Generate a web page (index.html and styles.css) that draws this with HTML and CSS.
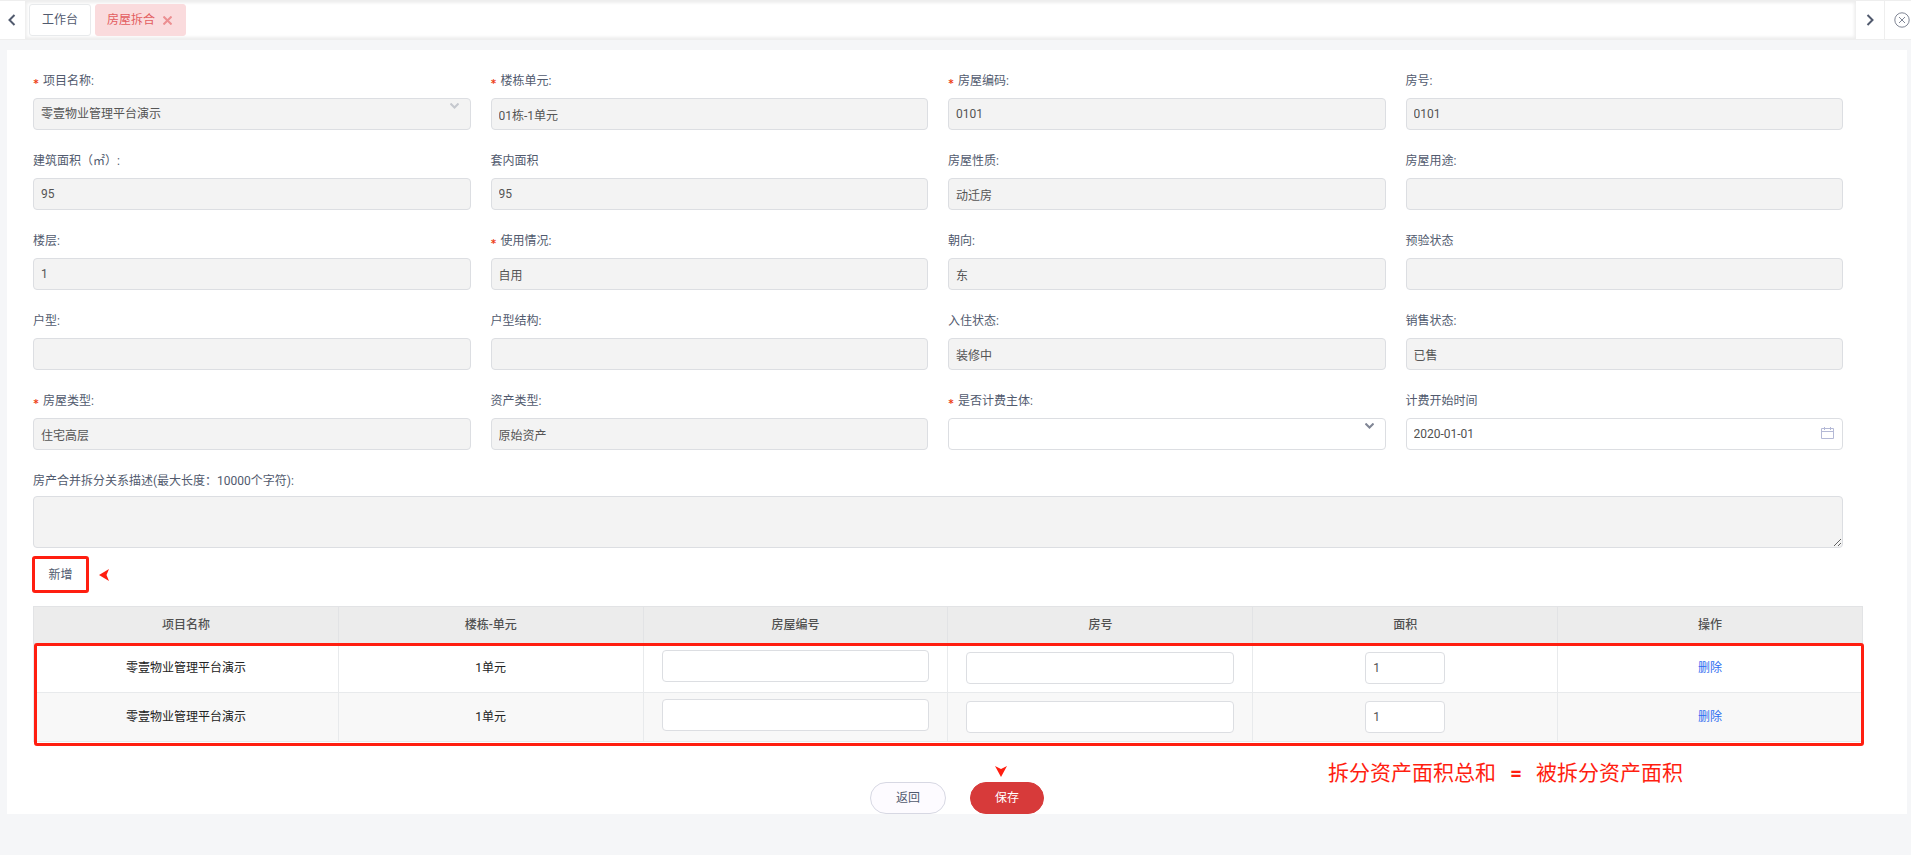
FILE: index.html
```
<!DOCTYPE html>
<html lang="zh-CN">
<head>
  <meta charset="utf-8">
  <meta name="viewport" content="width=device-width, initial-scale=1.0">
  <title>房屋拆合</title>
  <link rel="stylesheet" href="styles.css">
</head>
<body>

  <!-- 页签栏 -->
  <nav class="tabs">
    <button class="tabs-btn tabs-prev" type="button" aria-label="向左">
      <svg width="8" height="12" viewBox="0 0 8 12"><path d="M6.5 1L1.5 6l5 5"/></svg>
    </button>
    <div class="tabs-list">
      <a class="tab" href="#">工作台</a>
      <a class="tab tab-current" href="#">房屋拆合
        <svg width="9" height="9" viewBox="0 0 9 9"><path d="M.5.5l8 8M8.5.5l-8 8"/></svg>
      </a>
    </div>
    <button class="tabs-btn tabs-next" type="button" aria-label="向右">
      <svg width="8" height="12" viewBox="0 0 8 12"><path d="M1.5 1l5 5-5 5"/></svg>
    </button>
    <button class="tabs-btn tabs-close" type="button" aria-label="关闭全部">
      <svg width="16" height="16" viewBox="0 0 16 16"><circle cx="8" cy="8" r="7.2"/><path d="M5 5l6 6M11 5l-6 6"/></svg>
    </button>
  </nav>

  <main class="panel">
    <form class="form">
      <div class="fields">
        <div class="field">
          <label class="required" for="project">项目名称:</label>
          <div class="select">
            <select id="project" disabled><option>零壹物业管理平台演示</option></select>
            <svg width="9" height="6" viewBox="0 0 9 6"><path d="M.5.5l4 4 4-4"/></svg>
          </div>
        </div>
        <div class="field">
          <label class="required" for="unit">楼栋单元:</label>
          <input id="unit" type="text" value="01栋-1单元" disabled>
        </div>
        <div class="field">
          <label class="required" for="code">房屋编码:</label>
          <input id="code" type="text" value="0101" disabled>
        </div>
        <div class="field">
          <label for="room">房号:</label>
          <input id="room" type="text" value="0101" disabled>
        </div>

        <div class="field">
          <label for="area">建筑面积（㎡）:</label>
          <input id="area" type="text" value="95" disabled>
        </div>
        <div class="field">
          <label for="inner">套内面积</label>
          <input id="inner" type="text" value="95" disabled>
        </div>
        <div class="field">
          <label for="nature">房屋性质:</label>
          <input id="nature" type="text" value="动迁房" disabled>
        </div>
        <div class="field">
          <label for="purpose">房屋用途:</label>
          <input id="purpose" type="text" disabled>
        </div>

        <div class="field">
          <label for="floor">楼层:</label>
          <input id="floor" type="text" value="1" disabled>
        </div>
        <div class="field">
          <label class="required" for="usage">使用情况:</label>
          <input id="usage" type="text" value="自用" disabled>
        </div>
        <div class="field">
          <label for="facing">朝向:</label>
          <input id="facing" type="text" value="东" disabled>
        </div>
        <div class="field">
          <label for="check">预验状态</label>
          <input id="check" type="text" disabled>
        </div>

        <div class="field">
          <label for="layout">户型:</label>
          <input id="layout" type="text" disabled>
        </div>
        <div class="field">
          <label for="structure">户型结构:</label>
          <input id="structure" type="text" disabled>
        </div>
        <div class="field">
          <label for="live">入住状态:</label>
          <input id="live" type="text" value="装修中" disabled>
        </div>
        <div class="field">
          <label for="sale">销售状态:</label>
          <input id="sale" type="text" value="已售" disabled>
        </div>

        <div class="field">
          <label class="required" for="type">房屋类型:</label>
          <input id="type" type="text" value="住宅高层" disabled>
        </div>
        <div class="field">
          <label for="asset">资产类型:</label>
          <input id="asset" type="text" value="原始资产" disabled>
        </div>
        <div class="field">
          <label class="required" for="billing">是否计费主体:</label>
          <div class="select">
            <select id="billing"><option></option><option>是</option><option>否</option></select>
            <svg width="9" height="6" viewBox="0 0 9 6"><path d="M.5.5l4 4 4-4"/></svg>
          </div>
        </div>
        <div class="field">
          <label for="start">计费开始时间</label>
          <div class="date">
            <input id="start" type="text" value="2020-01-01">
            <svg width="13" height="13" viewBox="0 0 13 13"><path d="M.5 1.5h12v10H.5zM.5 4.500h12M3.500 0v3M9.500 0v3"/></svg>
          </div>
        </div>

        <div class="field field-full">
          <label for="desc">房产合并拆分关系描述(最大长度：10000个字符):</label>
          <textarea id="desc" disabled></textarea>
        </div>
      </div>

      <div class="toolbar">
        <button class="btn-add" type="button">新增</button>
        <svg class="arrow" width="10" height="12" viewBox="0 0 10 12"><path d="M0 6L10 0 7.500 6 10 12z"/></svg>
      </div>

      <div class="table-box">
        <table class="table">
          <thead>
            <tr>
              <th>项目名称</th>
              <th>楼栋-单元</th>
              <th>房屋编号</th>
              <th>房号</th>
              <th>面积</th>
              <th>操作</th>
            </tr>
          </thead>
          <tbody>
            <tr>
              <td>零壹物业管理平台演示</td>
              <td>1单元</td>
              <td class="cell-code"><input type="text" aria-label="房屋编号"></td>
              <td><input type="text" aria-label="房号"></td>
              <td><input class="input-area" type="text" value="1" aria-label="面积"></td>
              <td><a class="link" href="#">删除</a></td>
            </tr>
            <tr>
              <td>零壹物业管理平台演示</td>
              <td>1单元</td>
              <td class="cell-code"><input type="text" aria-label="房屋编号"></td>
              <td><input type="text" aria-label="房号"></td>
              <td><input class="input-area" type="text" value="1" aria-label="面积"></td>
              <td><a class="link" href="#">删除</a></td>
            </tr>
          </tbody>
        </table>
        <div class="mark"></div>
      </div>

      <div class="footer">
        <button class="btn" type="button">返回</button>
        <div class="save">
          <svg class="arrow" width="12" height="11" viewBox="0 0 12 11"><path d="M6 11L0 0l6 3 6-3z"/></svg>
          <button class="btn btn-primary" type="submit">保存</button>
        </div>
        <p class="note">拆分资产面积总和<b>=</b>被拆分资产面积</p>
      </div>
    </form>
  </main>

</body>
</html>
```
FILE: styles.css
```
* {
  box-sizing: border-box;
}
body {
  margin: 0;
  min-height: 100vh;
  background: #f5f6f8;
  color: #515a6e;
  font: 12px/18px Roboto, "Noto Sans CJK SC", sans-serif;
}
button,
input,
select,
textarea {
  font: inherit;
  color: inherit;
}
svg {
  fill: none;
  stroke: currentColor;
}

/* 页签栏 */
.tabs {
  display: flex;
  height: 40px;
  background: #fff;
  border-top: 1px solid #eee;
  border-bottom: 1px solid #eee;
}
.tabs-btn {
  display: flex;
  align-items: center;
  justify-content: center;
  flex: none;
  padding: 0;
  border: 0;
  background: #fff;
}
.tabs-btn path {
  stroke-width: 2;
}
.tabs-prev {
  width: 25px;
  padding-right: 2px;
}
.tabs-next {
  width: 28px;
}
.tabs-close {
  width: 27px;
  padding-left: 8px;
  border-left: 1px solid #eee;
  color: #808695;
}
.tabs-close path {
  stroke-width: 1;
}
.tabs-list {
  display: flex;
  flex: 1;
  gap: 4px;
  padding: 3px 4px;
  box-shadow: inset 0 0 3px 2px #eee;
}
.tab {
  display: flex;
  align-items: center;
  gap: 8px;
  height: 32px;
  padding: 0 12px;
  border: 1px solid #e8eaec;
  border-radius: 3px;
  background: #fff;
  color: #515a6e;
  text-decoration: none;
}
.tab-current {
  padding: 0 13px 0 11px;
  border-color: #fadbdd;
  background: #fadbdd;
  color: #e35d60;
}
.tab-current svg {
  stroke-width: 2;
  opacity: 0.6;
}

/* 表单 */
.panel {
  margin: 10px 4px 0 7px;
  padding: 20px 44px 0 26px;
  background: #fff;
}
.fields {
  display: grid;
  grid-template-columns: repeat(4, 1fr);
  column-gap: 20px;
  margin-right: 20px;
}
.field {
  height: 80px;
}
.field-full {
  grid-column: 1 / -1;
  height: 78px;
}
label {
  display: block;
  height: 28px;
  line-height: 22px;
}
.field-full label {
  height: 26px;
}
.required::before {
  content: "*";
  margin-right: 4px;
  color: #ed4014;
  font-family: "DejaVu Sans Mono", monospace;
  font-weight: bold;
  font-size: 10px;
  vertical-align: -2px;
  line-height: 1;
}
input,
select,
textarea {
  display: block;
  width: 100%;
  height: 32px;
  padding: 0 7px;
  border: 1px solid #dcdee2;
  border-radius: 4px;
  background: #fff;
  color: #515151;
  appearance: none;
}
input:disabled,
select:disabled,
textarea:disabled {
  background: #f3f3f3;
  color: #555;
  opacity: 1;
}
textarea {
  height: 52px;
  resize: vertical;
}
.select,
.date {
  position: relative;
}
.select svg {
  position: absolute;
  top: 5px;
  right: 12px;
  color: #808695;
  stroke-width: 2;
}
.select select:disabled + svg {
  color: #c5c8ce;
}
.date svg {
  position: absolute;
  top: 9px;
  right: 9px;
  color: #b4b9d6;
}
.arrow {
  fill: #ff1e10;
  stroke: none;
}
.toolbar {
  display: flex;
  align-items: center;
  gap: 10px;
  margin: 8px 0 13px -1px;
}
.btn-add {
  width: 57px;
  height: 37px;
  padding: 0;
  border: 3px solid #ff1e10;
  border-radius: 3px;
  background: #fff;
}

/* 表格 */
.table-box {
  position: relative;
}
.table {
  width: 100%;
  border: 1px solid #dcdee2;
  border-collapse: collapse;
  table-layout: fixed;
  color: #222;
}
.table th,
.table td {
  padding: 0 18px;
  border: 1px solid #e8eaec;
  text-align: center;
}
.table th {
  height: 37px;
  border-color: #e2e3e5;
  background: #ececec;
  color: #515151;
  font-weight: 500;
}
.table td {
  height: 49px;
}
.table tbody tr:nth-child(even) {
  background: #f8f8f8;
}
.table .cell-code {
  padding-bottom: 4px;
}
.table .input-area {
  width: 80px;
  margin: 0 auto;
}
.link {
  color: #2d6cf0;
  text-decoration: none;
}
.mark {
  position: absolute;
  top: 37px;
  right: -1px;
  bottom: -4px;
  left: 1px;
  border: 3px solid #ff1e10;
  border-radius: 3px;
  pointer-events: none;
}

/* 底部按钮 */
.footer {
  display: grid;
  grid-template-columns: 1fr auto auto 1fr;
  align-items: end;
  column-gap: 24px;
  height: 72px;
  padding-left: 18px;
}
.btn {
  grid-column: 2;
  width: 76px;
  height: 32px;
  padding: 0;
  border: 1px solid #d7d8e3;
  border-radius: 16px;
  background: #fdfbff;
}
.btn-primary {
  width: 74px;
  border-color: #d73a3a;
  background: #d73a3a;
  color: #fff;
}
.save {
  position: relative;
}
.save .arrow {
  position: absolute;
  top: -16px;
  left: 25px;
}
.note {
  align-self: start;
  margin: 16px 0 0 260px;
  color: #ff1e10;
  font-size: 21px;
  line-height: 30px;
}
.note b {
  margin: 0 14px;
}
```
